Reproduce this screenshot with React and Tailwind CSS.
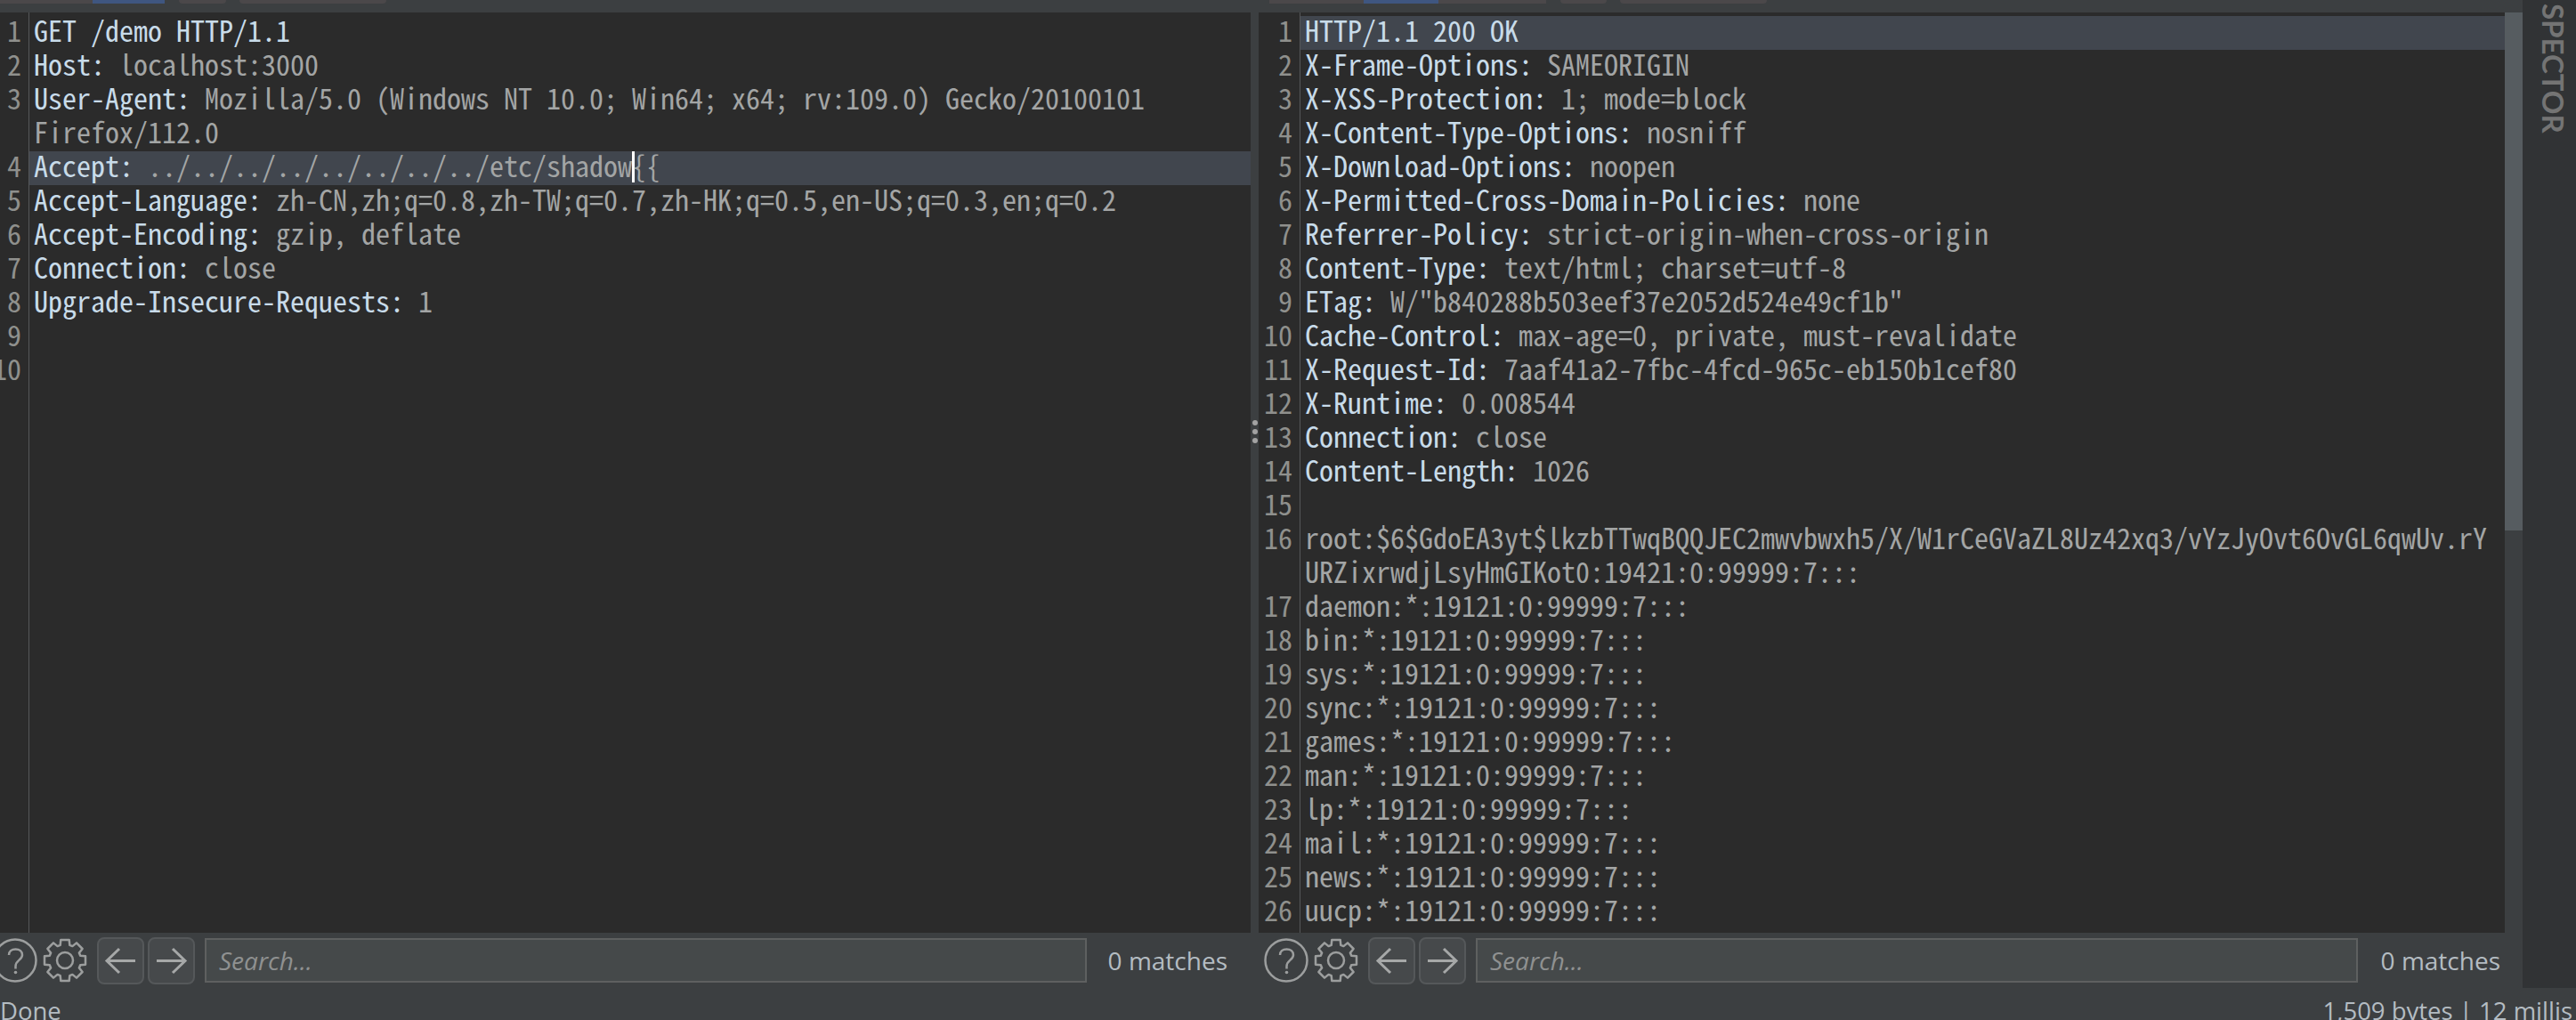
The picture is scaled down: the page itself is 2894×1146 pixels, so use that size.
const mono = "font-['Noto_Sans_Mono_CJK_SC','Liberation_Mono',monospace]"

const requestLines = [
  { rows: [["GET /demo HTTP/1.1", ""]] },
  { rows: [["Host: ", "localhost:3000"]] },
  {
    rows: [
      ["User-Agent: ", "Mozilla/5.0 (Windows NT 10.0; Win64; x64; rv:109.0) Gecko/20100101"],
      ["", "Firefox/112.0"],
    ],
  },
  { rows: [["Accept: ", "../../../../../../../../etc/shadow"]], active: true, caret: "{{" },
  { rows: [["Accept-Language: ", "zh-CN,zh;q=0.8,zh-TW;q=0.7,zh-HK;q=0.5,en-US;q=0.3,en;q=0.2"]] },
  { rows: [["Accept-Encoding: ", "gzip, deflate"]] },
  { rows: [["Connection: ", "close"]] },
  { rows: [["Upgrade-Insecure-Requests: ", "1"]] },
  { rows: [["", ""]] },
  { rows: [["", ""]] },
]

const responseLines = [
  { rows: [["HTTP/1.1 200 OK", ""]], active: true },
  { rows: [["X-Frame-Options: ", "SAMEORIGIN"]] },
  { rows: [["X-XSS-Protection: ", "1; mode=block"]] },
  { rows: [["X-Content-Type-Options: ", "nosniff"]] },
  { rows: [["X-Download-Options: ", "noopen"]] },
  { rows: [["X-Permitted-Cross-Domain-Policies: ", "none"]] },
  { rows: [["Referrer-Policy: ", "strict-origin-when-cross-origin"]] },
  { rows: [["Content-Type: ", "text/html; charset=utf-8"]] },
  { rows: [["ETag: ", 'W/"b840288b503eef37e2052d524e49cf1b"']] },
  { rows: [["Cache-Control: ", "max-age=0, private, must-revalidate"]] },
  { rows: [["X-Request-Id: ", "7aaf41a2-7fbc-4fcd-965c-eb150b1cef80"]] },
  { rows: [["X-Runtime: ", "0.008544"]] },
  { rows: [["Connection: ", "close"]] },
  { rows: [["Content-Length: ", "1026"]] },
  { rows: [["", ""]] },
  {
    rows: [
      ["", "root:$6$GdoEA3yt$lkzbTTwqBQQJEC2mwvbwxh5/X/W1rCeGVaZL8Uz42xq3/vYzJyOvt6OvGL6qwUv.rY"],
      ["", "URZixrwdjLsyHmGIKot0:19421:0:99999:7:::"],
    ],
  },
  { rows: [["", "daemon:*:19121:0:99999:7:::"]] },
  { rows: [["", "bin:*:19121:0:99999:7:::"]] },
  { rows: [["", "sys:*:19121:0:99999:7:::"]] },
  { rows: [["", "sync:*:19121:0:99999:7:::"]] },
  { rows: [["", "games:*:19121:0:99999:7:::"]] },
  { rows: [["", "man:*:19121:0:99999:7:::"]] },
  { rows: [["", "lp:*:19121:0:99999:7:::"]] },
  { rows: [["", "mail:*:19121:0:99999:7:::"]] },
  { rows: [["", "news:*:19121:0:99999:7:::"]] },
  { rows: [["", "uucp:*:19121:0:99999:7:::"]] },
]

function Editor({ lines, gutterWidth }) {
  return (
    <div className={`flex-1 min-h-0 flex overflow-hidden bg-[#2b2b2b] text-[32px] leading-[30px] whitespace-pre ${mono}`}>
      <div className={`${gutterWidth} shrink-0 pt-1 border-r border-[#555759] overflow-hidden`}>
        {lines.map((line, i) => (
          <div key={i} className="flex justify-end pr-2 text-[#8f908d]">
            <div>
              <div className="h-[38px]">{i + 1}</div>
              {line.rows.slice(1).map((_, j) => (
                <div key={j} className="h-[38px]" />
              ))}
            </div>
          </div>
        ))}
      </div>
      <div className="flex-1 min-w-0 pt-1">
        {lines.map((line, i) => (
          <div key={i} className={line.active ? "bg-[#41464e]" : ""}>
            {line.rows.map(([key, value], j) => (
              <div key={j} className="h-[38px] pl-[5px]">
                <span className="text-[#c8dbe9]">{key}</span>
                <span className="text-[#a3a5a5]">{value}</span>
                {line.caret && (
                  <>
                    <span className="inline-block w-0 h-[35px] align-top border-l-[3px] border-white -mr-[3px]" />
                    <span className="text-[#a3a5a5]">{line.caret}</span>
                  </>
                )}
              </div>
            ))}
          </div>
        ))}
      </div>
    </div>
  )
}

function HelpIcon() {
  return (
    <svg viewBox="0 0 50 50" className="w-[50px] h-[50px] shrink-0" fill="none" stroke="#9c9e9e" strokeWidth="2.5">
      <circle cx="25" cy="25" r="23.5" />
      <path d="M18 19c0-4 3-6.500 7.500-6.500s7.500 2.500 7.500 6.500c0 5.500-7.500 6-7.500 12.500v3" strokeWidth="2.500" />
      <circle cx="25.500" cy="38.500" r="1.800" fill="#9c9e9e" stroke="none" />
    </svg>
  )
}

function gearPath() {
  const cx = 25
  const cy = 25
  const points = []
  for (let t = 0; t < 8; t++) {
    const a = (t * Math.PI) / 4 - Math.PI / 2
    const at = (r, d) => `${(cx + r * Math.cos(a + d)).toFixed(1)} ${(cy + r * Math.sin(a + d)).toFixed(1)}`
    points.push(at(18, -0.3), at(23.500, -0.2), at(23.500, 0.2), at(18, 0.3))
  }
  return "M" + points.join("L") + "Z"
}

function GearIcon() {
  return (
    <svg viewBox="0 0 50 50" className="w-[50px] h-[50px] shrink-0" fill="none" stroke="#9c9e9e" strokeWidth="2.500" strokeLinejoin="round">
      <path d={gearPath()} />
      <circle cx="25" cy="25" r="9" />
    </svg>
  )
}

function NavButton({ left }) {
  return (
    <button className="w-[53px] h-[53px] shrink-0 rounded-lg border-2 border-[#55585a] bg-[#46494b]">
      <svg viewBox="0 0 49 49" className="w-full h-full" fill="none" stroke="#a6a8a8" strokeWidth="3">
        {left ? <path d="M41 24.500H9M23 11 9 24.500 23 38" /> : <path d="M8 24.500h32M26 11l14 13.500L26 38" />}
      </svg>
    </button>
  )
}

function SearchBar({ leftPad, matchGap, rightPad }) {
  return (
    <div className={`h-[62px] shrink-0 flex items-center ${leftPad} ${rightPad}`}>
      <HelpIcon />
      <div className="ml-1.5">
        <GearIcon />
      </div>
      <div className="ml-[11px] flex gap-1">
        <NavButton left />
        <NavButton />
      </div>
      <div className="ml-[11px] flex-1 h-[50px] flex items-center pl-[14px] border-2 border-[#5e6060] bg-[#45494a] font-['Open_Sans',sans-serif] italic text-[28px] text-[#8f9191]">
        Search...
      </div>
      <div className={`${matchGap} font-['Open_Sans',sans-serif] text-[28px] text-[#b4bcc2] whitespace-nowrap`}>0 matches</div>
    </div>
  )
}

function Tabs({ widths }) {
  return (
    <div className="flex h-1">
      <div className={`${widths[0]} bg-[#4b484a]`} />
      <div className={`${widths[1]} bg-[#3f5680]`} />
      {widths[2] && <div className={`${widths[2]} bg-[#4b484a]`} />}
      <div className={`ml-4 ${widths[3]} bg-[#4b484a] rounded-bl-sm rounded-br-sm`} />
      <div className={`ml-[15px] ${widths[4]} bg-[#4b484a] rounded-bl-sm rounded-br-sm`} />
    </div>
  )
}

export default function App() {
  return (
    <div className="w-[2894px] h-[1146px] overflow-hidden flex flex-col bg-[#3c3f41]">
      <div className="h-[1110px] shrink-0 flex">
        <div className="flex-1 min-w-0 flex flex-col">
          <div className="h-[14px] shrink-0 flex">
            <div className="w-[1426px] shrink-0">
              <Tabs widths={["w-[104px]", "w-[81px]", "", "w-[53px]", "w-[165px]"]} />
            </div>
            <Tabs widths={["w-[106px]", "w-[84px]", "w-[121px]", "w-[52px]", "w-[165px]"]} />
          </div>

          <div className="flex-1 min-h-0 flex">
            <div className="w-[1405px] shrink-0 flex flex-col">
              <Editor lines={requestLines} gutterWidth="w-[33px]" />
              <SearchBar leftPad="-ml-2" matchGap="ml-6" rightPad="pr-[26px]" />
            </div>
            <div className="w-[9px] shrink-0 flex flex-col items-center gap-1 pt-[458px]">
              <div className="w-1.5 h-1.5 rounded-full bg-[#a3a3a3]" />
              <div className="w-1.5 h-1.5 rounded-full bg-[#a3a3a3]" />
              <div className="w-1.5 h-1.5 rounded-full bg-[#a3a3a3]" />
            </div>
            <div className="flex-1 min-w-0 flex flex-col">
              <div className="flex-1 min-h-0 flex">
                <Editor lines={responseLines} gutterWidth="w-[47px]" />
                <div className="w-5 shrink-0">
                  <div className="h-[582px] bg-[#565c60]" />
                </div>
              </div>
              <SearchBar leftPad="pl-1.5" matchGap="ml-[26px]" rightPad="pr-[25px]" />
            </div>
          </div>
        </div>

        <div className="w-[60px] shrink-0 bg-[#313335] flex justify-center pl-2.5">
          <span className="[writing-mode:vertical-rl] font-['Lato',sans-serif] font-bold text-[33px] leading-[52px] text-[#747474] pt-1">
            SPECTOR
          </span>
        </div>
      </div>

      <div className="flex-1 min-h-0 flex justify-between pt-[7px] pr-1 font-['Open_Sans',sans-serif] text-[27.5px] leading-[38px] text-[#b4bcc2] whitespace-nowrap">
        <span>Done</span>
        <span>1,509 bytes | 12 millis</span>
      </div>
    </div>
  )
}
